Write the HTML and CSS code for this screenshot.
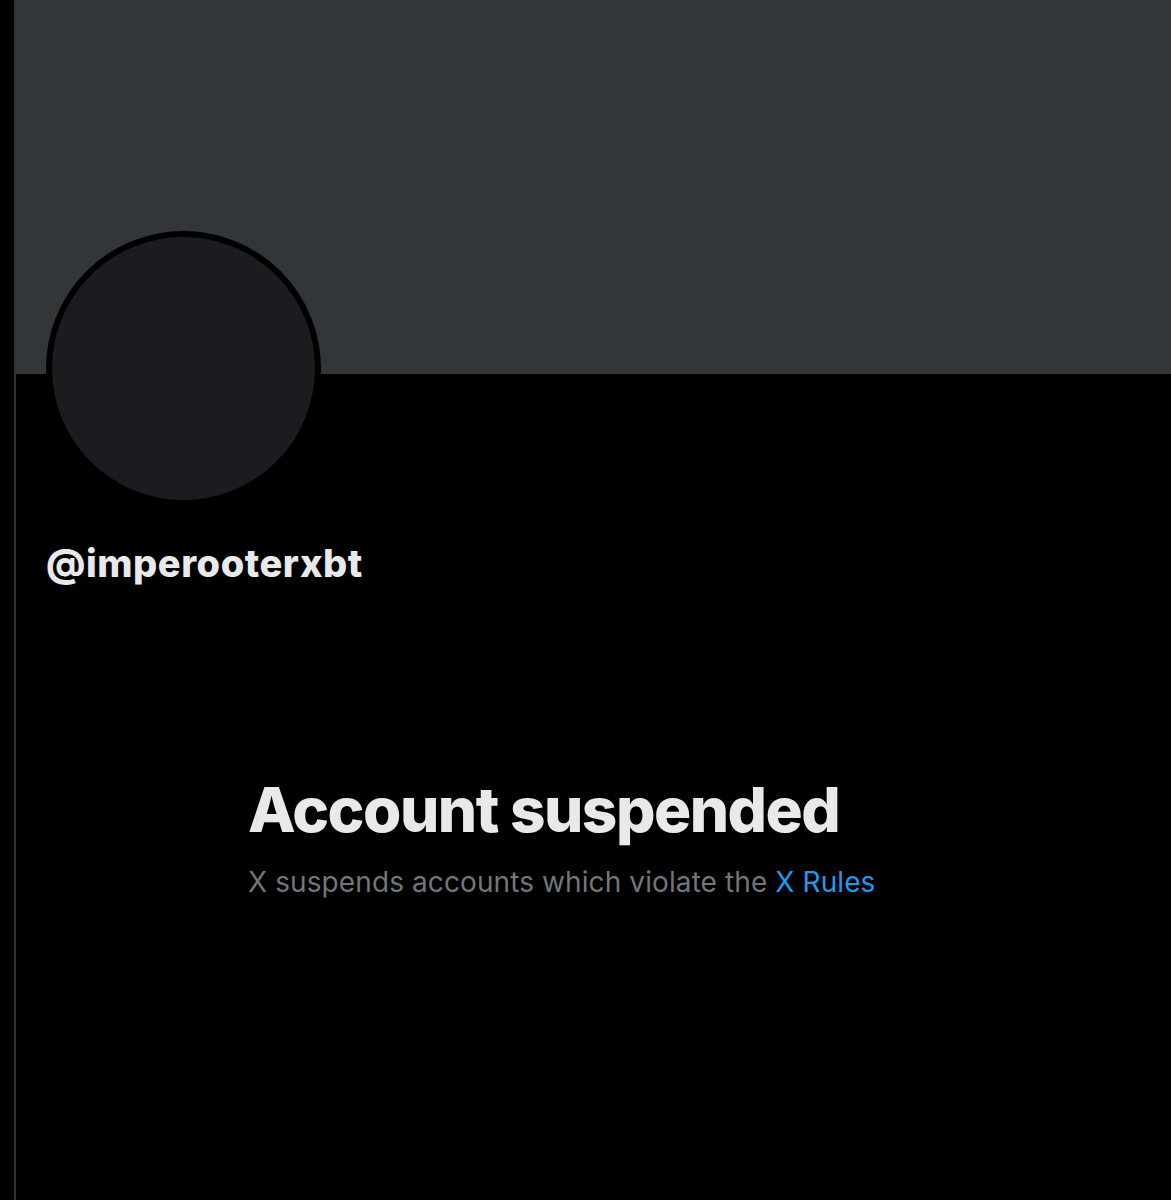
FILE: index.html
```html
<!DOCTYPE html>
<html>
<head>
<meta charset="utf-8">
<link rel="stylesheet" href="styles.css">
</head>
<body>
<div class="page">
  <div class="gutter"></div>
  <main class="main">
    <div class="banner"></div>
    <div class="profile">
      <div class="avatar"></div>
      <div class="handle">@imperooterxbt</div>
    </div>
    <section class="notice">
      <h1 class="title">Account suspended</h1>
      <p class="sub">X suspends accounts which violate the <a class="link" href="#">X Rules</a></p>
    </section>
  </main>
</div>
</body>
</html>
```
FILE: styles.css
```css
html, body {
  margin: 0;
  padding: 0;
  background: #000;
}
body {
  font-family: Inter, "Liberation Sans", sans-serif;
  color: #e7e9ea;
}
.page {
  display: flex;
  min-height: 1200px;
}
.gutter {
  width: 14px;
  flex: none;
  background: #000;
}
.main {
  flex: 1;
  border-left: 2px solid #2f3336;
  min-height: 1200px;
}
.banner {
  height: 374px;
  background: #333639;
}
.profile {
  padding-left: 30px;
}
.avatar {
  width: 263px;
  height: 263px;
  border-radius: 50%;
  background: #1b1c20;
  border: 6px solid #000;
  margin-top: -143px;
}
.handle {
  margin-top: 33px;
  font-size: 38px;
  font-weight: 800;
  line-height: 48px;
  letter-spacing: 0.55px;
}
.notice {
  padding-left: 232px;
  padding-top: 185px;
}
.title {
  margin: 0;
  font-size: 62px;
  font-weight: 800;
  line-height: 76px;
  letter-spacing: -1.5px;
}
.sub {
  margin: 14px 0 0;
  font-size: 28px;
  line-height: 40px;
  font-weight: 400;
  letter-spacing: 0.1px;
  color: #71767b;
}
.link {
  color: #1d9bf0;
  text-decoration: none;
}
```
